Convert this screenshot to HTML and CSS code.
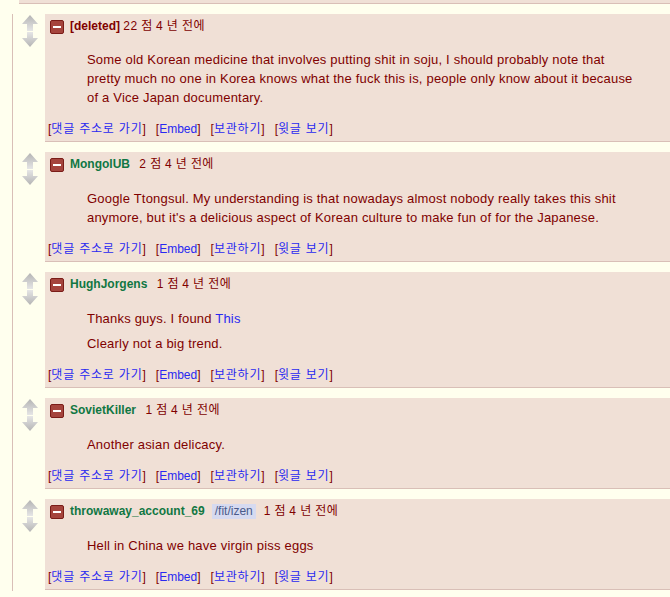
FILE: index.html
```html
<!DOCTYPE html>
<html lang="ko">
<head>
<meta charset="utf-8">
<title>comments</title>
<link rel="stylesheet" href="styles.css">
</head>
<body>
<div class="parent-tail"></div>
<div class="children">

  <div class="comment">
    <div class="votes">
      <svg class="arrow" width="16" height="16" viewBox="0 0 16 16"><defs><linearGradient id="gu" x1="0" y1="0" x2="0" y2="1"><stop offset="0" stop-color="#b4b4b4"/><stop offset="1" stop-color="#e6e6e6"/></linearGradient></defs><path d="M8 0 L16 9 L11 9 L11 16 L5 16 L5 9 L0 9 Z" fill="url(#gu)"/></svg>
      <svg class="arrow" width="16" height="15" viewBox="0 0 16 15"><defs><linearGradient id="gd" x1="0" y1="0" x2="0" y2="1"><stop offset="0" stop-color="#e6e6e6"/><stop offset="1" stop-color="#b4b4b4"/></linearGradient></defs><path d="M5 0 L11 0 L11 6 L16 6 L8 15 L0 6 L5 6 Z" fill="url(#gd)"/></svg>
    </div>
    <div class="entry first">
      <p class="tagline"><span class="expand"></span><span class="author deleted">[deleted]</span> <span class="score">22 점</span> <span class="time">4 년 전에</span></p>
      <div class="md">
        <p>Some old Korean medicine that involves putting shit in soju, I should probably note that pretty much no one in Korea knows what the fuck this is, people only know about it because of a Vice Japan documentary.</p>
      </div>
      <ul class="buttons"><li>[<a class="ko" href="#">댓글 주소로 가기</a>]</li><li>[<a href="#">Embed</a>]</li><li>[<a class="ko" href="#">보관하기</a>]</li><li>[<a class="ko" href="#">윗글 보기</a>]</li></ul>
    </div>
  </div>

  <div class="comment">
    <div class="votes">
      <svg class="arrow" width="16" height="16" viewBox="0 0 16 16"><path d="M8 0 L16 9 L11 9 L11 16 L5 16 L5 9 L0 9 Z" fill="url(#gu)"/></svg>
      <svg class="arrow" width="16" height="15" viewBox="0 0 16 15"><path d="M5 0 L11 0 L11 6 L16 6 L8 15 L0 6 L5 6 Z" fill="url(#gd)"/></svg>
    </div>
    <div class="entry">
      <p class="tagline"><span class="expand"></span><span class="author">MongolUB</span> <span class="score">2 점</span> <span class="time">4 년 전에</span></p>
      <div class="md">
        <p>Google Ttongsul. My understanding is that nowadays almost nobody really takes this shit anymore, but it's a delicious aspect of Korean culture to make fun of for the Japanese.</p>
      </div>
      <ul class="buttons"><li>[<a class="ko" href="#">댓글 주소로 가기</a>]</li><li>[<a href="#">Embed</a>]</li><li>[<a class="ko" href="#">보관하기</a>]</li><li>[<a class="ko" href="#">윗글 보기</a>]</li></ul>
    </div>
  </div>

  <div class="comment">
    <div class="votes">
      <svg class="arrow" width="16" height="16" viewBox="0 0 16 16"><path d="M8 0 L16 9 L11 9 L11 16 L5 16 L5 9 L0 9 Z" fill="url(#gu)"/></svg>
      <svg class="arrow" width="16" height="15" viewBox="0 0 16 15"><path d="M5 0 L11 0 L11 6 L16 6 L8 15 L0 6 L5 6 Z" fill="url(#gd)"/></svg>
    </div>
    <div class="entry">
      <p class="tagline"><span class="expand"></span><span class="author">HughJorgens</span> <span class="score">1 점</span> <span class="time">4 년 전에</span></p>
      <div class="md">
        <p>Thanks guys. I found <a href="#">This</a></p>
        <p>Clearly not a big trend.</p>
      </div>
      <ul class="buttons"><li>[<a class="ko" href="#">댓글 주소로 가기</a>]</li><li>[<a href="#">Embed</a>]</li><li>[<a class="ko" href="#">보관하기</a>]</li><li>[<a class="ko" href="#">윗글 보기</a>]</li></ul>
    </div>
  </div>

  <div class="comment">
    <div class="votes">
      <svg class="arrow" width="16" height="16" viewBox="0 0 16 16"><path d="M8 0 L16 9 L11 9 L11 16 L5 16 L5 9 L0 9 Z" fill="url(#gu)"/></svg>
      <svg class="arrow" width="16" height="15" viewBox="0 0 16 15"><path d="M5 0 L11 0 L11 6 L16 6 L8 15 L0 6 L5 6 Z" fill="url(#gd)"/></svg>
    </div>
    <div class="entry">
      <p class="tagline"><span class="expand"></span><span class="author">SovietKiller</span> <span class="score">1 점</span> <span class="time">4 년 전에</span></p>
      <div class="md">
        <p>Another asian delicacy.</p>
      </div>
      <ul class="buttons"><li>[<a class="ko" href="#">댓글 주소로 가기</a>]</li><li>[<a href="#">Embed</a>]</li><li>[<a class="ko" href="#">보관하기</a>]</li><li>[<a class="ko" href="#">윗글 보기</a>]</li></ul>
    </div>
  </div>

  <div class="comment">
    <div class="votes">
      <svg class="arrow" width="16" height="16" viewBox="0 0 16 16"><path d="M8 0 L16 9 L11 9 L11 16 L5 16 L5 9 L0 9 Z" fill="url(#gu)"/></svg>
      <svg class="arrow" width="16" height="15" viewBox="0 0 16 15"><path d="M5 0 L11 0 L11 6 L16 6 L8 15 L0 6 L5 6 Z" fill="url(#gd)"/></svg>
    </div>
    <div class="entry">
      <p class="tagline"><span class="expand"></span><span class="author">throwaway_account_69</span><span class="flair">/fit/izen</span><span class="score">1 점</span> <span class="time">4 년 전에</span></p>
      <div class="md">
        <p>Hell in China we have virgin piss eggs</p>
      </div>
      <ul class="buttons"><li>[<a class="ko" href="#">댓글 주소로 가기</a>]</li><li>[<a href="#">Embed</a>]</li><li>[<a class="ko" href="#">보관하기</a>]</li><li>[<a class="ko" href="#">윗글 보기</a>]</li></ul>
    </div>
  </div>

</div>
</body>
</html>
```

FILE: styles.css
```css
html, body {
  margin: 0;
  padding: 0;
  background: #ffffee;
  overflow: hidden;
}

body {
  font-family: "Liberation Sans", Arial, "Noto Sans CJK KR", sans-serif;
  color: #800000;
}

.parent-tail {
  margin-left: 19px;
  height: 3px;
  background: #f0e0d6;
  border-bottom: 1px solid #d9bfb7;
}

.children {
  margin-top: 10px;
  margin-left: 12px;
  border-left: 1px solid #d9bfb7;
  padding-bottom: 1px;
}

.comment {
  display: flex;
  align-items: flex-start;
  margin-bottom: 10px;
}

.comment:last-child {
  margin-bottom: 0;
}

.votes {
  width: 16px;
  margin-left: 9px;
  margin-top: 1px;
  display: flex;
  flex-direction: column;
  gap: 1px;
}

.arrow {
  display: block;
}

.entry {
  flex: 1;
  margin-left: 7px;
  background: #f0e0d6;
  border-bottom: 1px solid #d9bfb7;
  padding: 3px 0 4px 0;
}

.tagline {
  margin: 0;
  padding-left: 5px;
  font-size: 12px;
  line-height: 18px;
  white-space: nowrap;
}

.expand {
  display: inline-block;
  width: 12px;
  height: 12px;
  border: 1px solid #7a1c18;
  border-radius: 2px;
  background: #a5443d;
  margin-right: 6px;
  vertical-align: -4px;
  position: relative;
}

.expand::after {
  content: "";
  position: absolute;
  left: 2px;
  right: 2px;
  top: 5px;
  height: 2px;
  background: #ffffff;
}

.author {
  color: #117743;
  font-weight: bold;
  margin-right: 6px;
}

.author.deleted {
  color: #800000;
  margin-right: 0;
}

.flair {
  display: inline-block;
  background: #d6daf0;
  color: #4a5a8a;
  padding: 0 3px;
  line-height: 15px;
  margin: 0 8px 0 1px;
}

.score, .time {
  color: #800000;
  letter-spacing: 0.4px;
}

.md {
  margin-top: 16px;
  padding-left: 42px;
  padding-right: 37px;
  font-size: 13px;
  line-height: 19px;
  letter-spacing: 0.2px;
}

.first .md {
  margin-top: 15px;
}

.md p {
  margin: 0;
}

.md p + p {
  margin-top: 6px;
}

.md a {
  color: #2929f0;
  text-decoration: none;
}

.buttons {
  list-style: none;
  margin: 14px 0 0 0;
  padding: 0 0 0 3px;
  font-size: 12px;
  line-height: 16px;
  white-space: nowrap;
}

.buttons li {
  display: inline;
  margin-right: 10px;
  color: #800000;
}

.buttons a {
  color: #2929f0;
  text-decoration: none;
}

.buttons a.ko {
  letter-spacing: 0.8px;
}
```
